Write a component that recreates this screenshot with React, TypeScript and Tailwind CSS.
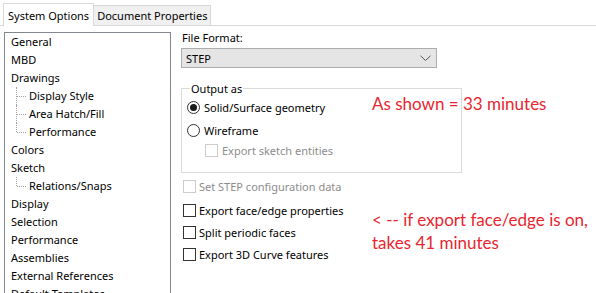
import React from "react";

const Check = ({ disabled = false }: { disabled?: boolean }) => (
  <span
    className={`inline-block w-[13px] h-[13px] border bg-white shrink-0 ${
      disabled ? "border-[#cccccc]" : "border-[#333333]"
    }`}
  />
);

const Radio = ({ checked = false }: { checked?: boolean }) => (
  <span className="inline-flex items-center justify-center w-[13px] h-[13px] rounded-full border border-[#333333] bg-white shrink-0">
    {checked && <span className="w-[7px] h-[7px] rounded-full bg-[#1a1a1a]" />}
  </span>
);

const TreeItem = ({ label }: { label: string }) => (
  <div className="h-[18px] flex items-start pt-[3px] pl-[6px]">{label}</div>
);

const TreeChild = ({ label, last = false }: { label: string; last?: boolean }) => (
  <div className="h-[18px] flex items-start pt-[3px] relative pl-[24px]">
    <span
      className={`absolute left-[11px] top-0 border-l border-dotted border-[#a0a0a0] ${
        last ? "h-[9px]" : "h-[18px]"
      }`}
    />
    <span className="absolute left-[12px] top-[9px] w-[9px] border-t border-dotted border-[#a0a0a0]" />
    {label}
  </div>
);

export default function App() {
  return (
    <div className="w-[596px] h-[293px] overflow-hidden bg-white relative text-[11px] leading-none text-black font-['Noto_Sans',sans-serif] whitespace-nowrap">
      {/* tabs */}
      <div className="h-[26px] flex items-end pl-[3px] border-b border-[#d9d9d9]">
        <div className="h-[23px] px-[4px] flex items-center bg-white border border-b-0 border-[#d9d9d9] -mb-px relative z-10 shrink-0">
          System Options
        </div>
        <div className="h-[21px] px-[3px] flex items-center bg-[#f0f0f0] border border-l-0 border-[#d9d9d9] -mb-px shrink-0">
          Document Properties
        </div>
      </div>

      <div className="flex pt-[6px]">
        {/* tree */}
        <div className="ml-[4px] w-[167px] h-[300px] border border-[#828790] shrink-0">
          <TreeItem label="General" />
          <TreeItem label="MBD" />
          <TreeItem label="Drawings" />
          <TreeChild label="Display Style" />
          <TreeChild label="Area Hatch/Fill" />
          <TreeChild label="Performance" last />
          <TreeItem label="Colors" />
          <TreeItem label="Sketch" />
          <TreeChild label="Relations/Snaps" last />
          <TreeItem label="Display" />
          <TreeItem label="Selection" />
          <TreeItem label="Performance" />
          <TreeItem label="Assemblies" />
          <TreeItem label="External References" />
          <TreeItem label="Default Templates" />
        </div>

        {/* content */}
        <div className="ml-[10px] flex flex-col">
          <div className="h-[16px] flex items-start pl-[1px]">File Format:</div>
          <div className="w-[256px] h-[20px] bg-[#e5e5e5] border border-[#adadad] flex items-center justify-between pl-[4px] pr-[4px]">
            <span>STEP</span>
            <svg width="11" height="7" viewBox="0 0 11 7" className="mr-[1px]">
              <path d="M0.5 0.8 L5.5 5.5 L10.5 0.8" fill="none" stroke="#555" strokeWidth="1" />
            </svg>
          </div>

          {/* group box */}
          <div className="mt-[20px] w-[281px] h-[85px] border border-[#dcdcdc] relative">
            <span className="absolute left-[8px] -top-[8px] bg-white px-[1px] h-[15px] flex items-center">
              Output as
            </span>
            <div className="flex flex-col pl-[5px] pt-[11px]">
              <div className="h-[14px] flex items-center gap-[4px]">
                <Radio checked />
                <span>Solid/Surface geometry</span>
              </div>
              <div className="mt-[9px] h-[14px] flex items-center gap-[4px]">
                <Radio />
                <span>Wireframe</span>
              </div>
              <div className="mt-[6px] h-[14px] flex items-center gap-[4px] pl-[18px] text-[#8c8c8c]">
                <Check disabled />
                <span>Export sketch entities</span>
              </div>
            </div>
          </div>

          <div className="mt-[6px] h-[14px] flex items-center gap-[3px] pl-[2px] text-[#8c8c8c]">
            <Check disabled />
            <span>Set STEP configuration data</span>
          </div>
          <div className="mt-[10px] h-[14px] flex items-center gap-[3px] pl-[2px]">
            <Check />
            <span>Export face/edge properties</span>
          </div>
          <div className="mt-[8px] h-[14px] flex items-center gap-[3px] pl-[2px]">
            <Check />
            <span>Split periodic faces</span>
          </div>
          <div className="mt-[8px] h-[14px] flex items-center gap-[3px] pl-[2px]">
            <Check />
            <span>Export 3D Curve features</span>
          </div>
        </div>
      </div>

      {/* annotations */}
      <div className="absolute left-[372px] top-[94px] text-[17px] leading-[20px] text-[#e8262f] font-['Lato',sans-serif]">
        As shown = 33 minutes
      </div>
      <div className="absolute left-[372px] top-[208px] text-[17px] leading-[23px] text-[#e8262f] font-['Lato',sans-serif]">
        <div>&lt; -- if export face/edge is on,</div>
        <div>takes 41 minutes</div>
      </div>
    </div>
  );
}
